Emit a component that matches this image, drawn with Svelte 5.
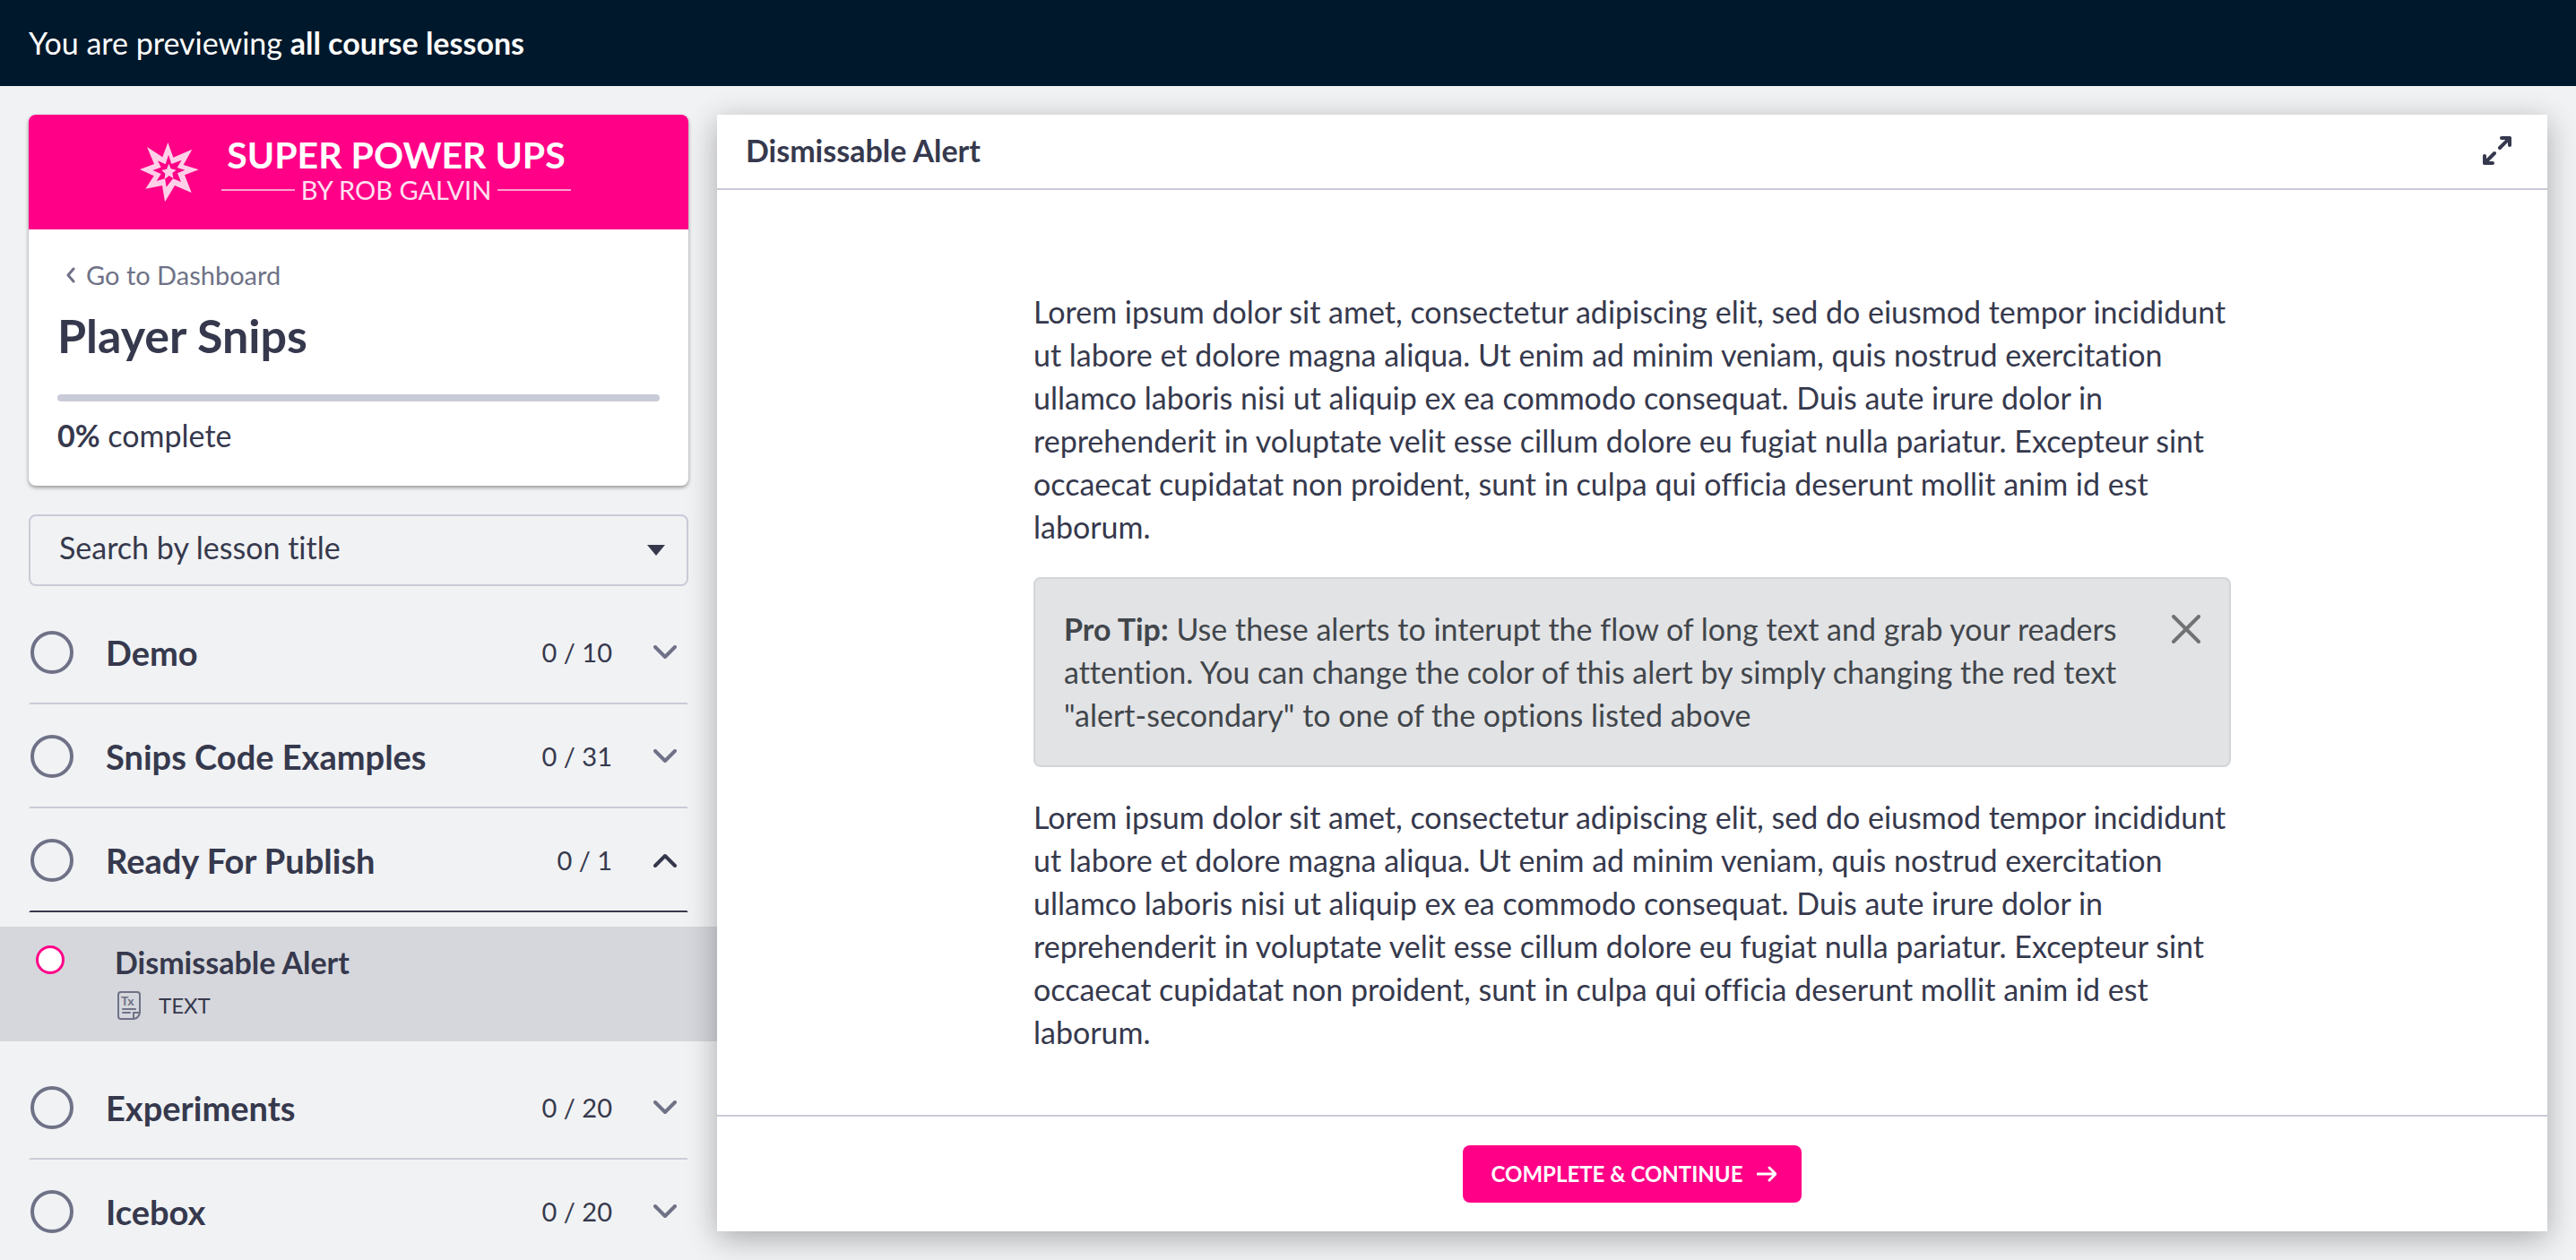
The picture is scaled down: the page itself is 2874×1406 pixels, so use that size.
<script>
  const sections = [
    { title: 'Demo', count: '0 / 10', open: false, lessons: [] },
    { title: 'Snips Code Examples', count: '0 / 31', open: false, lessons: [] },
    { title: 'Ready For Publish', count: '0 / 1', open: true, lessons: [{ title: 'Dismissable Alert', kind: 'TEXT' }] },
    { title: 'Experiments', count: '0 / 20', open: false, lessons: [] },
    { title: 'Icebox', count: '0 / 20', open: false, lessons: [] }
  ];
  const lorem =
    'Lorem ipsum dolor sit amet, consectetur adipiscing elit, sed do eiusmod tempor incididunt ut labore et dolore magna aliqua. Ut enim ad minim veniam, quis nostrud exercitation ullamco laboris nisi ut aliquip ex ea commodo consequat. Duis aute irure dolor in reprehenderit in voluptate velit esse cillum dolore eu fugiat nulla pariatur. Excepteur sint occaecat cupidatat non proident, sunt in culpa qui officia deserunt mollit anim id est laborum.';
  let showAlert = $state(true);
  let progress = $state(0);
</script>

<div class="page">
  <header class="preview">You are previewing&nbsp;<strong>all course lessons</strong></header>

  <div class="shell">
    <aside class="sidebar">
      <section class="card">
        <div class="brand">
          <svg class="star" viewBox="50 52 204 208" aria-hidden="true">
            <path fill="#ffd0e8" d="M147 57 165 107 228 80 199 132 250 148 203 166 226 225 170 201 137 256 128 201 72 212 100 169 53 147 101 129 77 72 129 106Z" />
            <path fill="#ff0087" d="M149 98 159 129 193 116 178 141 204 149 179 160 191 189 164 178 142 206 137 178 109 186 124 162 96 150 124 140 113 118 139 130Z" />
            <path fill="#ffd0e8" d="M150 128 157 145 175 149 162 159 165 177 151 168 136 180 138 161 126 150 143 146Z" />
          </svg>
          <div class="brand-text">
            <span class="brand-name">SUPER POWER UPS</span>
            <span class="brand-by">BY ROB GALVIN</span>
          </div>
        </div>
        <div class="card-body">
          <a class="back" href="#dashboard">
            <svg viewBox="0 0 12 18" aria-hidden="true"><path d="M9 2 3 9l6 7" /></svg>
            Go to Dashboard
          </a>
          <h1>Player Snips</h1>
          <div class="track" role="progressbar" aria-label="Course progress" aria-valuenow={progress} aria-valuemin="0" aria-valuemax="100">
            <div class="fill" style="width: {progress}%"></div>
          </div>
          <p class="complete"><strong>{progress}%</strong> complete</p>
        </div>
      </section>

      <div class="search">
        <select aria-label="Search by lesson title">
          <option>Search by lesson title</option>
        </select>
        <svg viewBox="0 0 20 12" aria-hidden="true"><path d="M0 0h20L10 12Z" /></svg>
      </div>

      <nav aria-label="Lessons">
        {#each sections as s}
          <button class="row" class:open={s.open} aria-expanded={s.open}>
            <span class="ring"></span>
            <span class="row-title">{s.title}</span>
            <span class="count">{s.count}</span>
            <svg class="chevron" viewBox="0 0 26 16" aria-hidden="true"><path d="M2 2 13 13 24 2" /></svg>
          </button>
          {#each s.lessons as l}
            <a class="lesson" href="#lesson" aria-current="page">
              <span class="dot"></span>
              <span class="lesson-text">
                <span class="lesson-title">{l.title}</span>
                <span class="kind">
                  <svg viewBox="0 0 26 32" aria-hidden="true">
                    <path d="M4 1H22Q25 1 25 4V24Q24 30 18 31H4Q1 31 1 28V4Q1 1 4 1ZM25 24H18V31M6 20H20M6 24H14" />
                    <text x="4" y="16">Tx</text>
                  </svg>
                  {l.kind}
                </span>
              </span>
            </a>
          {/each}
        {/each}
      </nav>
    </aside>

    <main class="panel">
      <header class="panel-head">
        <h2>Dismissable Alert</h2>
        <button class="expand" aria-label="Full screen">
          <svg viewBox="0 0 32 32" aria-hidden="true"><path d="M19 13 30 2M21 2H30V10M13 19 2 30M2 22V30H11" /></svg>
        </button>
      </header>
      <div class="content">
        <article>
          <p>{lorem}</p>
          {#if showAlert}
            <div class="alert" role="alert">
              <p><strong>Pro Tip:</strong> Use these alerts to interupt the flow of long text and grab your readers attention. You can change the color of this alert by simply changing the red text "alert-secondary" to one of the options listed above</p>
              <button class="close" aria-label="Close" onclick={() => (showAlert = false)}>
                <svg viewBox="0 0 32 32" aria-hidden="true"><path d="M2 2 30 30M30 2 2 30" /></svg>
              </button>
            </div>
          {/if}
          <p>{lorem}</p>
        </article>
      </div>
      <footer>
        <button class="primary">
          COMPLETE &amp; CONTINUE
          <svg viewBox="0 0 22 18" aria-hidden="true"><path d="M1 9H21M14 2 21 9 14 16" /></svg>
        </button>
      </footer>
    </main>
  </div>
</div>

<style>
  :global(body) {
    background: #f1f2f4;
  }
  .page {
    height: 100vh;
    display: flex;
    flex-direction: column;
    overflow: hidden;
    color: #36394d;
    font-family: Lato, "Open Sans", sans-serif;
    font-size: 34px;
    line-height: 48px;
    font-variant-ligatures: none;
  }
  .page :global(*) {
    box-sizing: border-box;
  }
  h1, h2, p {
    margin: 0;
  }
  button {
    font: inherit;
    color: inherit;
    background: none;
    border: 0;
    padding: 0;
    cursor: pointer;
  }
  svg {
    display: block;
    flex: none;
    fill: none;
    stroke: currentColor;
    stroke-linecap: round;
    stroke-linejoin: round;
  }
  .preview {
    flex: none;
    display: flex;
    align-items: center;
    height: 96px;
    padding: 0 32px;
    background: #00182b;
    color: #fff;
  }
  .shell {
    flex: 1;
    min-height: 0;
    display: grid;
    grid-template-columns: 800px minmax(0, 1fr);
    padding: 32px 32px 32px 0;
  }
  .sidebar {
    min-height: 0;
  }
  .card {
    margin: 0 32px 32px;
    border-radius: 8px;
    background: #fff;
    box-shadow: 0 2px 4px rgba(0, 0, 0, 0.4);
    overflow: hidden;
  }
  .brand {
    display: flex;
    align-items: center;
    justify-content: center;
    gap: 24px;
    height: 128px;
    padding-right: 8px;
    background: #ff0087;
    color: #fff;
  }
  .star {
    width: 68px;
    height: 70px;
    stroke: none;
  }
  .brand-text {
    display: flex;
    flex-direction: column;
    align-items: center;
  }
  .brand-name {
    font-size: 41px;
    font-weight: 700;
    line-height: 40px;
  }
  .brand-by {
    display: flex;
    align-items: center;
    gap: 7px;
    font-size: 29px;
    line-height: 38px;
    color: #ffe0f0;
  }
  .brand-by::before,
  .brand-by::after {
    content: "";
    width: 82px;
    height: 2px;
    background: #ff9fd0;
  }
  .card-body {
    padding: 32px;
  }
  .back {
    display: flex;
    align-items: center;
    gap: 11px;
    padding-left: 9px;
    font-size: 29px;
    line-height: 38px;
    color: #6f7287;
    text-decoration: none;
  }
  .back svg {
    width: 12px;
    height: 18px;
    stroke-width: 3;
  }
  h1 {
    margin-top: 16px;
    font-size: 52px;
    font-weight: 700;
    line-height: 64px;
  }
  .track {
    height: 8px;
    margin-top: 34px;
    border-radius: 4px;
    background: #c9cbd8;
    overflow: hidden;
  }
  .fill {
    height: 100%;
    background: #ff0087;
  }
  .complete {
    margin-top: 14px;
  }
  .search {
    display: grid;
    align-items: center;
    margin: 0 32px 16px;
  }
  .search select,
  .search svg {
    grid-area: 1 / 1;
  }
  .search select {
    appearance: none;
    height: 80px;
    padding: 0 64px 6px 32px;
    border: 2px solid #c9cbd8;
    border-radius: 8px;
    background: transparent;
    font: inherit;
    color: inherit;
  }
  .search svg {
    justify-self: end;
    width: 20px;
    height: 12px;
    margin-right: 26px;
    fill: currentColor;
    stroke: none;
    pointer-events: none;
  }
  .row {
    display: flex;
    align-items: center;
    width: 736px;
    height: 116px;
    margin: 0 32px;
    padding: 0 11px 0 0;
    border: 2px solid transparent;
    border-bottom-color: #c9cbd8;
    text-align: left;
  }
  .row.open {
    border-bottom-color: #36394d;
  }
  .ring {
    flex: none;
    width: 48px;
    height: 48px;
    border: 4px solid #6f7287;
    border-radius: 50%;
  }
  .row-title {
    flex: 1;
    padding-left: 36px;
    font-size: 38px;
    font-weight: 700;
  }
  .count {
    font-size: 29px;
  }
  .chevron {
    width: 26px;
    height: 16px;
    margin-left: 46px;
    stroke-width: 4;
    color: #6f7287;
  }
  .open .chevron {
    color: #36394d;
    rotate: 180deg;
  }
  .lesson {
    display: flex;
    gap: 56px;
    height: 128px;
    margin: 16px 0;
    padding: 16px 40px;
    background: #d6d7dc;
    color: inherit;
    text-decoration: none;
  }
  .dot {
    flex: none;
    width: 32px;
    height: 32px;
    margin-top: 5px;
    border: 3px solid #ff0087;
    border-radius: 50%;
    background: #fff;
  }
  .lesson-text {
    display: flex;
    flex-direction: column;
  }
  .lesson-title {
    font-weight: 700;
  }
  .kind {
    display: flex;
    align-items: center;
    gap: 20px;
    padding: 4px 3px;
    font-size: 24px;
    line-height: 40px;
  }
  .kind svg {
    width: 26px;
    height: 32px;
    stroke-width: 2;
    color: #6f7287;
  }
  .kind text {
    font-size: 14px;
    font-weight: 700;
    fill: currentColor;
    stroke: none;
  }
  .panel {
    min-height: 0;
    display: flex;
    flex-direction: column;
    background: #fff;
    box-shadow: 0 8px 32px rgba(0, 0, 0, 0.3);
  }
  .panel-head {
    flex: none;
    display: flex;
    align-items: center;
    justify-content: space-between;
    height: 84px;
    padding: 0 40px 2px 32px;
    border-bottom: 2px solid #c9cbd8;
  }
  h2 {
    font-size: 34px;
    font-weight: 700;
    line-height: 48px;
  }
  .expand svg,
  .close svg {
    width: 32px;
    height: 32px;
    stroke-width: 4;
  }
  .content {
    flex: 1;
    min-height: 0;
    overflow: hidden;
    padding: 112px 32px 32px;
  }
  article {
    display: flex;
    flex-direction: column;
    gap: 32px;
    max-width: 1336px;
    margin: 0 auto;
  }
  .alert {
    display: flex;
    align-items: flex-start;
    justify-content: space-between;
    gap: 40px;
    padding: 32px;
    border: 2px solid #d2d6d9;
    border-radius: 8px;
    background: #e2e3e5;
    color: #41464b;
  }
  .alert p {
    max-width: 1200px;
  }
  .close {
    margin-top: 8px;
    color: #717274;
  }
  footer {
    flex: none;
    display: flex;
    justify-content: center;
    padding: 32px;
    border-top: 2px solid #c9cbd8;
  }
  .primary {
    display: flex;
    align-items: center;
    gap: 16px;
    height: 64px;
    padding: 0 28px 0 32px;
    border-radius: 8px;
    background: #ff0087;
    color: #fff;
    font-size: 24px;
    font-weight: 700;
  }
  .primary svg {
    width: 22px;
    height: 18px;
    stroke-width: 3;
  }
</style>
